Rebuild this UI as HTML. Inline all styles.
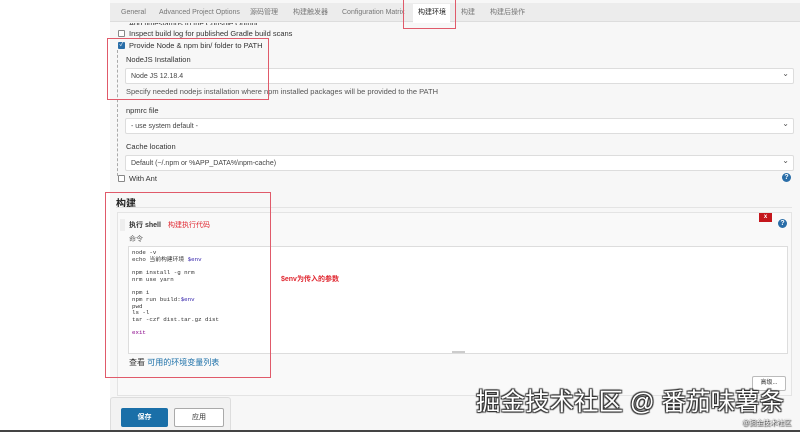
<!DOCTYPE html>
<html><head><meta charset="utf-8"><style>
*{margin:0;padding:0;box-sizing:border-box}
body{width:800px;height:432px;overflow:hidden;background:#fff;font-family:"Liberation Sans","Noto Sans CJK SC",sans-serif;position:relative;color:#333}
.a{position:absolute;white-space:nowrap}
.t{font-size:7px;color:#777;line-height:9px;height:9px}
.lb{font-size:7.5px;color:#333}
.sel{position:absolute;left:125px;width:669px;height:16px;background:#fff;border:1px solid #ddd;border-radius:2px;font-size:7px;padding:4px 5px;color:#444}
.sel:after{content:"⌄";position:absolute;right:4px;top:0px;font-size:8px;color:#555}
.cb{position:absolute;width:7px;height:7px;border:1px solid #888;background:#fff;border-radius:1px}
.red{position:absolute;border:1px solid #e05a6a}
.help{position:absolute;width:9px;height:9px;border-radius:50%;background:#2a6ea8;color:#fff;font-size:7px;font-weight:bold;text-align:center;line-height:9px}
.code{font-family:"Liberation Mono","Noto Sans CJK SC",monospace;font-size:5.8px;line-height:6.7px;color:#333}
</style></head><body>
<div class="a" style="left:110px;top:0;width:690px;height:432px;background:#f7f7f7"></div>
<div class="a" style="left:110px;top:3px;width:690px;height:19px;background:#ececec;border-bottom:1px solid #ddd"></div>
<div class="a" style="left:413px;top:4px;width:37px;height:19px;background:#fff"></div>
<div class="a t" style="left:121px;top:8px">General</div>
<div class="a t" style="left:159px;top:8px">Advanced Project Options</div>
<div class="a t" style="left:250px;top:8px">源码管理</div>
<div class="a t" style="left:293px;top:8px">构建触发器</div>
<div class="a t" style="left:342px;top:8px">Configuration Matrix</div>
<div class="a t" style="left:418px;top:8px;color:#222">构建环境</div>
<div class="a t" style="left:461px;top:8px">构建</div>
<div class="a t" style="left:490px;top:8px">构建后操作</div>
<div class="red" style="left:403px;top:-1px;width:53px;height:30px"></div>
<div class="a lb" style="left:129px;top:23px;height:2px;overflow:hidden;line-height:1px">Add timestamps to the Console Output</div>
<div class="cb" style="left:118px;top:30px"></div>
<div class="a lb" style="left:129px;top:29px">Inspect build log for published Gradle build scans</div>
<div class="cb" style="left:118px;top:42px;background:#2a6ea8;border-color:#2a6ea8;color:#fff;font-size:6px;line-height:5px;text-align:center">✓</div>
<div class="a lb" style="left:129px;top:41px">Provide Node &amp; npm bin/ folder to PATH</div>
<div class="a" style="left:117px;top:50px;height:126px;border-left:1px dashed #aaa"></div>
<div class="a lb" style="left:126px;top:55px">NodeJS Installation</div>
<div class="sel" style="top:68px">Node JS 12.18.4</div>
<div class="a" style="left:126px;top:87px;font-size:7.5px;color:#555">Specify needed nodejs installation where npm installed packages will be provided to the PATH</div>
<div class="red" style="left:107px;top:38px;width:162px;height:62px"></div>
<div class="a lb" style="left:126px;top:106px">npmrc file</div>
<div class="sel" style="top:118px">- use system default -</div>
<div class="a lb" style="left:126px;top:142px">Cache location</div>
<div class="sel" style="top:155px">Default (~/.npm or %APP_DATA%\npm-cache)</div>
<div class="cb" style="left:118px;top:175px"></div>
<div class="a lb" style="left:129px;top:174px">With Ant</div>
<div class="help" style="left:782px;top:173px">?</div>
<div class="a" style="left:116px;top:195px;font-size:10px;font-weight:bold;color:#222">构建</div>
<div class="a" style="left:116px;top:207px;width:676px;border-top:1px solid #e4e4e4"></div>
<div class="a" style="left:117px;top:212px;width:675px;height:184px;border:1px solid #e4e4e4;background:#f9f9f9"></div>
<div class="a" style="left:759px;top:213px;width:13px;height:9px;background:#c4161c;color:#fff;font-size:6px;font-weight:bold;text-align:center;line-height:9px">x</div>
<div class="help" style="left:778px;top:219px">?</div>
<div class="a" style="left:120px;top:219px;width:5px;height:12px;background:#eee"></div>
<div class="a" style="left:129px;top:220px;font-size:7px;font-weight:bold;color:#333">执行 shell</div>
<div class="a" style="left:168px;top:220px;font-size:7px;color:#e0262f">构建执行代码</div>
<div class="a" style="left:129px;top:234px;font-size:7px;color:#666">命令</div>
<div class="a" style="left:128px;top:246px;width:660px;height:108px;background:#fff;border:1px solid #ddd"></div>
<div class="a" style="left:452px;top:351px;width:13px;height:2px;background:#ccc"></div>
<div class="a code" style="left:132px;top:250px">node -v<br>echo 当前构建环境 <span style="color:#32a">$env</span><br><br>npm install -g nrm<br>nrm use yarn<br><br>npm i<br>npm run build:<span style="color:#32a">$env</span><br>pwd<br>ls -l<br>tar -czf dist.tar.gz dist<br><br><span style="color:#808">exit</span></div>
<div class="a" style="left:281px;top:274px;font-size:7px;font-weight:bold;color:#e0262f">$env为传入的参数</div>
<div class="a" style="left:129px;top:357px;font-size:8px;color:#333">查看 <span style="color:#1a6fa8">可用的环境变量列表</span></div>
<div class="red" style="left:105px;top:192px;width:166px;height:186px"></div>
<div class="a" style="left:752px;top:376px;width:34px;height:15px;background:#fff;border:1px solid #bbb;border-radius:2px;font-size:6px;text-align:center;line-height:13px">高级...</div>
<div class="a" style="left:110px;top:397px;width:121px;height:35px;background:#f2f2f2;border:1px solid #ddd;border-radius:3px"></div>
<div class="a" style="left:121px;top:408px;width:47px;height:19px;background:#1a6fa8;border-radius:2px;color:#fff;font-size:7px;font-weight:bold;text-align:center;line-height:19px">保存</div>
<div class="a" style="left:174px;top:408px;width:50px;height:19px;background:#fff;border:1px solid #aaa;border-radius:2px;font-size:7px;text-align:center;line-height:17px">应用</div>
<div class="a" style="left:476px;top:388px;font-size:24.5px;line-height:30px;color:#fff;text-shadow:0 0 1px #222,1px 1px 1px #333,-1px -1px 1px #333,1px -1px 1px #333,-1px 1px 1px #333">掘金技术社区 @ 番茄味薯条</div>
<div class="a" style="left:742px;top:418px;font-size:7px;color:#fff;text-shadow:0 0 1px #222,1px 1px 1px #333">@掘金技术社区</div>
<div class="a" style="left:0;top:430px;width:800px;height:2px;background:#444"></div>
</body></html>
